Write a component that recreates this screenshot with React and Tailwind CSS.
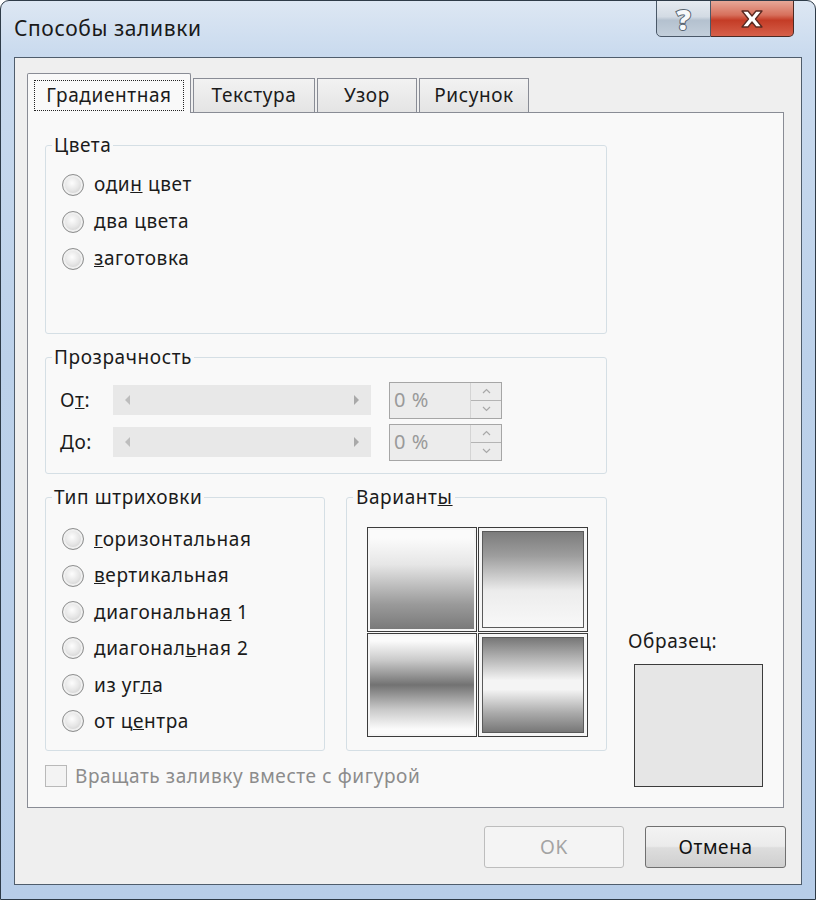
import React from "react";

const Radio = ({ children, h = "h-[37px]" }) => (
	<div className={`flex items-center ${h}`}>
		<span className="w-[22px] h-[22px] rounded-full border border-[#8e8f8f] bg-[radial-gradient(circle_at_45%_40%,#fdfdfd_0%,#e6e6e6_45%,#bdbdbd_100%)] shadow-[inset_0_0_0_2px_#f0f0f0]" />
		<span className="ml-[10px] text-[#1b1b1b]">{children}</span>
	</div>
);

const Group = ({ title, className, children }) => (
	<fieldset className={`border border-[#d5dfe5] rounded-[3px] ${className}`}>
		<legend className="ml-[6px] px-[2px] leading-[24px] text-[#1b1b1b]">{title}</legend>
		{children}
	</fieldset>
);

const ScrollBar = () => (
	<div className="w-[258px] h-[30px] bg-[#e8e8e8] flex items-center justify-between px-[10px]">
		<svg width="8" height="12" viewBox="0 0 8 12">
			<path d="M7 1 L2 6 L7 11 Z" fill="#bdbdbd" />
		</svg>
		<svg width="8" height="12" viewBox="0 0 8 12">
			<path d="M1 1 L6 6 L1 11 Z" fill="#a9a9a9" />
		</svg>
	</div>
);

const Spinner = () => (
	<div className="ml-[18px] w-[113px] h-[37px] border border-[#a6a6a6] bg-[#ececec] flex">
		<div className="flex-1 flex items-center pl-[4px] text-[20px] text-[#9a9a9a]">0 %</div>
		<div className="w-[31px] flex flex-col border-l border-[#d4d4d4]">
			<div className="flex-1 flex items-center justify-center border-b border-[#b4b4b4]">
				<svg width="9" height="6" viewBox="0 0 9 6">
					<path d="M1 5 L4.5 1.5 L8 5" fill="none" stroke="#a8a8a8" strokeWidth="1.2" />
				</svg>
			</div>
			<div className="flex-1 flex items-center justify-center">
				<svg width="9" height="6" viewBox="0 0 9 6">
					<path d="M1 1 L4.5 4.5 L8 1" fill="none" stroke="#a8a8a8" strokeWidth="1.2" />
				</svg>
			</div>
		</div>
	</div>
);

const Variant = ({ gradient, className = "" }) => (
	<div className={`border border-[#3c3c3c] p-[2px] bg-[#f6f6f6] ${className}`}>
		<div className={`w-full h-full ${gradient}`} />
	</div>
);

export default function App() {
	return (
		<div className="w-[816px] h-[900px] flex flex-col rounded-t-[9px] border border-[#2e3b48] bg-[linear-gradient(180deg,#dde7f3_0%,#c9daee_6%,#bcd1ea_40%,#b7cde8_100%)] font-['Noto_Sans','Open_Sans',sans-serif] text-[19px] tracking-[0.6px] overflow-hidden">
			{/* title bar */}
			<div className="h-[56px] flex justify-between items-start shrink-0">
				<div className="pl-[13px] pt-[12px] text-[21px] leading-[30px] text-[#1a1a1a]">Способы заливки</div>
				<div className="flex mr-[21px] -mt-px">
					<div className="w-[55px] h-[37px] rounded-bl-[5px] border border-[#4a5868] bg-[linear-gradient(180deg,#e6ebf1_0%,#d3dbe4_45%,#b4c1cf_55%,#c3cfdb_100%)] flex items-center justify-center">
						<span className="text-[28px] font-black leading-none text-[#f7f8fa] tracking-normal [-webkit-text-stroke:2px_#56626f] [paint-order:stroke_fill]">?</span>
					</div>
					<div className="w-[83px] h-[37px] rounded-br-[5px] border border-l-0 border-[#4a2a24] bg-[linear-gradient(180deg,#e7a898_0%,#d7705c_40%,#c43c26_55%,#d6604a_100%)] flex items-center justify-center">
						<svg width="26" height="20" viewBox="0 0 26 20">
							<path
								d="M3 2 H9 L13 7 L17 2 H23 L16.5 10 L23 18 H17 L13 13 L9 18 H3 L9.5 10 Z"
								fill="#ffffff"
								stroke="#5a2a22"
								strokeWidth="1.3"
								strokeLinejoin="round"
							/>
						</svg>
					</div>
				</div>
			</div>

			{/* client area */}
			<div className="mx-[13px] mb-[14px] flex-1 border border-[#4f5d6c] bg-[#efefef] flex flex-col pl-[12px] pt-[15px]">
				{/* tabs */}
				<div className="flex items-end h-[39px] relative z-10">
					<div className="w-[164px] h-[40px] -mb-px border border-b-0 border-[#898c95] bg-[#f9f9f9] rounded-t-[2px] px-[6px] pt-[6px] pb-[2px]">
						<div className="w-full h-full border border-dotted border-[#222] flex items-center justify-center text-[#1b1b1b]">
							Градиентная
						</div>
					</div>
					<div className="ml-[2px] w-[122px] h-[34px] border border-b-0 border-[#898c95] bg-[linear-gradient(180deg,#f2f2f2,#e4e4e4)] flex items-center justify-center text-[#1b1b1b]">
						Текстура
					</div>
					<div className="ml-[2px] w-[100px] h-[34px] border border-b-0 border-[#898c95] bg-[linear-gradient(180deg,#f2f2f2,#e4e4e4)] flex items-center justify-center text-[#1b1b1b]">
						Узор
					</div>
					<div className="ml-[2px] w-[110px] h-[34px] border border-b-0 border-[#898c95] bg-[linear-gradient(180deg,#f2f2f2,#e4e4e4)] flex items-center justify-center text-[#1b1b1b]">
						Рисунок
					</div>
				</div>

				{/* tab panel */}
				<div className="w-[757px] h-[696px] border border-[#898c95] bg-[#f9f9f9] pl-[17px] pt-[20px] flex items-end pb-[19px]">
					<div className="w-[562px] flex flex-col">
						<Group title="Цвета" className="h-[201px]">
							<div className="pl-[16px] pt-[9px]">
								<Radio>
									оди<u>н</u> цвет
								</Radio>
								<Radio>
									<u>д</u>ва цвета
								</Radio>
								<Radio>
									<u>з</u>аготовка
								</Radio>
							</div>
						</Group>

						<Group title="Прозрачность" className="h-[129px] mt-[11px]">
							<div className="pl-[14px] pt-[11px] flex flex-col gap-[2px]">
								<div className="flex items-center h-[40px]">
									<span className="w-[53px] text-[#1b1b1b]">
										О<u>т</u>:
									</span>
									<ScrollBar />
									<Spinner />
								</div>
								<div className="flex items-center h-[40px]">
									<span className="w-[53px] text-[#1b1b1b]">
										<u>Д</u>о:
									</span>
									<ScrollBar />
									<Spinner />
								</div>
							</div>
						</Group>

						<div className="flex mt-[11px] h-[266px]">
							<Group title="Тип штриховки" className="w-[280px] h-full">
								<div className="pl-[16px] pt-[12px]">
									<Radio h="h-[36.4px]">
										<u>г</u>оризонтальная
									</Radio>
									<Radio h="h-[36.4px]">
										<u>в</u>ертикальная
									</Radio>
									<Radio h="h-[36.4px]">
										диагональна<u>я</u> 1
									</Radio>
									<Radio h="h-[36.4px]">
										диагонал<u>ь</u>ная 2
									</Radio>
									<Radio h="h-[36.4px]">
										из уг<u>л</u>а
									</Radio>
									<Radio h="h-[36.4px]">
										от ц<u>е</u>нтра
									</Radio>
								</div>
							</Group>
							<Group
								title={
									<span className="ml-px">
										Вариант<u>ы</u>
									</span>
								}
								className="ml-[21px] w-[261px] h-full"
							>
								<div className="pl-[20px] pt-[18px] grid grid-cols-[110px_110px] grid-rows-[105px_104px] gap-[1px]">
									<Variant gradient="bg-[linear-gradient(180deg,#fbfbfb_8%,#e6e6e6_35%,#9a9a9a_75%,#7a7a7a_100%)]" />
									<Variant
										className="p-[3px]"
										gradient="border border-[#5a5a5a] bg-[linear-gradient(180deg,#7c7c7c_0%,#9d9d9d_25%,#ececec_62%,#f8f8f8_100%)]"
									/>
									<Variant gradient="bg-[linear-gradient(180deg,#fbfbfb_5%,#c9c9c9_25%,#727272_50%,#c9c9c9_75%,#fbfbfb_95%)]" />
									<Variant
										className="p-[3px]"
										gradient="border border-[#5a5a5a] bg-[linear-gradient(180deg,#777_0%,#aaa_18%,#f4f4f4_45%,#f4f4f4_55%,#aaa_80%,#777_100%)]"
									/>
								</div>
							</Group>
						</div>

						<div className="flex items-center mt-[13px] h-[24px]">
							<span className="w-[22px] h-[22px] border border-[#b9b9b9] bg-[#f3f3f3]" />
							<span className="ml-[8px] text-[#8c8c8c]">Вращать заливку вместе с фигурой</span>
						</div>
					</div>

					<div className="ml-[21px] flex flex-col mb-px">
						<span className="text-[#1b1b1b] leading-[24px]">Образец:</span>
						<div className="ml-[6px] mt-[11px] w-[129px] h-[123px] border border-[#3c3c3c] bg-[#e6e6e6]" />
					</div>
				</div>

				{/* buttons */}
				<div className="flex justify-end mt-[18px] mr-[15px] gap-[21px]">
					<div className="w-[140px] h-[42px] rounded-[3px] border border-[#bdbdbd] bg-[#f4f4f4] flex items-center justify-center text-[#a3a3a3]">
						OK
					</div>
					<div className="w-[141px] h-[42px] rounded-[3px] border border-[#707070] bg-[linear-gradient(180deg,#f3f3f3_0%,#ebebeb_48%,#dddddd_52%,#cfcfcf_100%)] flex items-center justify-center text-[#111]">
						Отмена
					</div>
				</div>
			</div>
		</div>
	);
}
